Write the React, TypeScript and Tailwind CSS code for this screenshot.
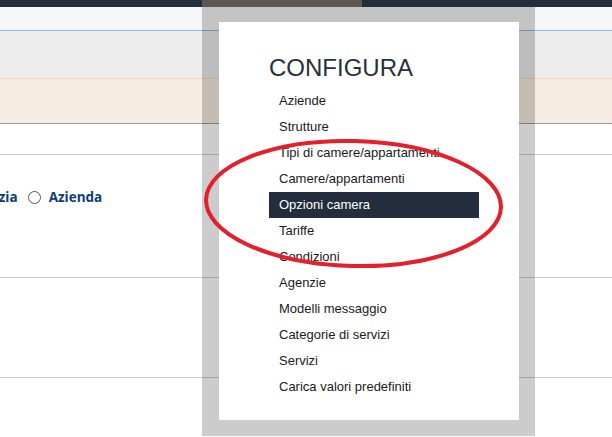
const menu = [
  "Aziende",
  "Strutture",
  "Tipi di camere/appartamenti",
  "Camere/appartamenti",
  "Opzioni camera",
  "Tariffe",
  "Condizioni",
  "Agenzie",
  "Modelli messaggio",
  "Categorie di servizi",
  "Servizi",
  "Carica valori predefiniti",
];

function ConfigMenu() {
  return (
    <div className="absolute left-[202px] top-[7px] h-[429px] w-[333px] bg-black/20 pb-[16px] pl-[17px] pr-[16px] pt-[15px]">
      <div className="h-full w-full bg-white pl-[50px] pt-[32px]">
        <h2 className="text-[24px] leading-[28px] text-[#263140]">CONFIGURA</h2>
        <ul className="mt-[6px] w-[210px]">
          {menu.map((item) => (
            <li
              key={item}
              className={
                item === "Opzioni camera"
                  ? "h-[26px] bg-[#232d3e] pl-[10px] text-[13px] leading-[26px] text-white"
                  : "h-[26px] pl-[10px] text-[13px] leading-[26px] text-[#1a1a1a]"
              }
            >
              {item}
            </li>
          ))}
        </ul>
      </div>
    </div>
  );
}

export default function App() {
  return (
    <div className="relative h-[437px] w-[612px] overflow-hidden bg-white font-['Liberation_Sans',Arial,sans-serif]">
      <div className="flex h-[7px]">
        <div className="w-[202px] bg-[#232d3e]" />
        <div className="w-[160px] bg-[#5c5750]" />
        <div className="flex-1 bg-[#232d3e]" />
      </div>
      <div className="h-[24px] border-b border-[#8db4e6] bg-[#f6f6f6]" />
      <div className="h-[48px] border-b border-[#f5d6b4] bg-[#ededed]" />
      <div className="h-[45px] border-b border-[#999999] bg-[#f7ece2]" />
      <div className="h-[31px] border-b border-[#cccccc]" />
      <div className="h-[123px] border-b border-[#cccccc] pt-[33px]">
        <div className="flex items-center font-['Open_Sans',sans-serif] text-[13.5px] font-bold leading-[18px] text-[#0d3c78]">
          <span className="-ml-[35px]">Agenzia</span>
          <span className="ml-[10px] h-[13px] w-[13px] rounded-full border border-[#555]" />
          <span className="ml-[8px]">Azienda</span>
        </div>
      </div>
      <div className="h-[100px] border-b border-[#cccccc]" />

      <ConfigMenu />

      <svg className="pointer-events-none absolute left-0 top-0" width="612" height="437">
        <ellipse
          cx="353.5"
          cy="203.5"
          rx="147.5"
          ry="62.5"
          fill="none"
          stroke="#e3202b"
          strokeWidth="4"
          transform="rotate(1.5 353.5 203.5)"
        />
      </svg>
    </div>
  );
}
